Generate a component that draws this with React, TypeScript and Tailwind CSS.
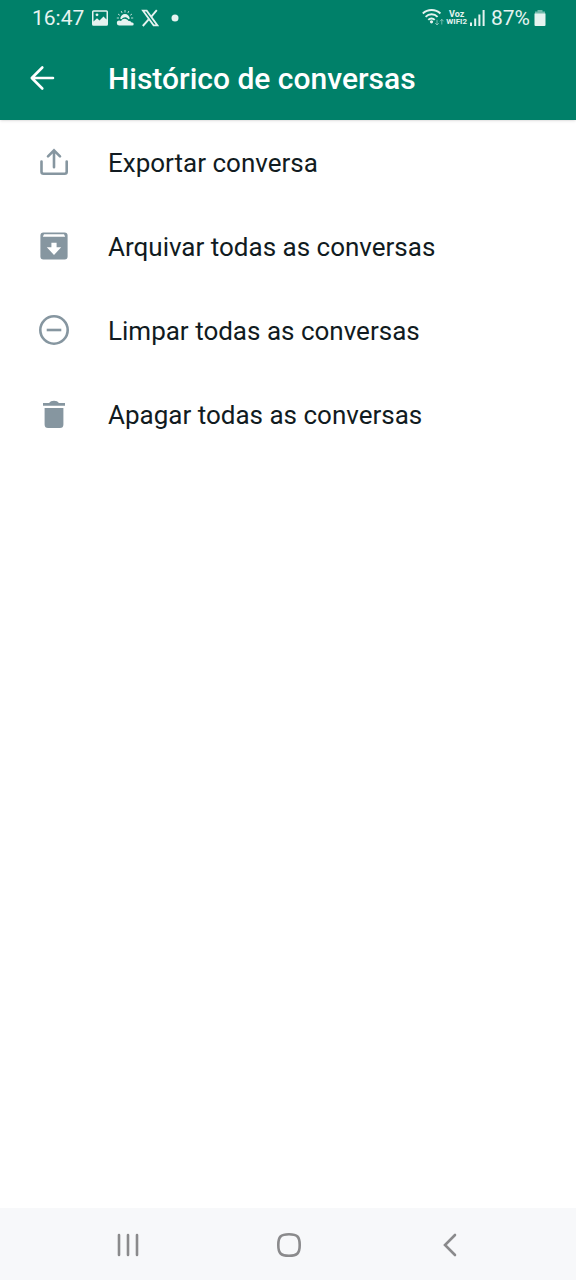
import React from "react";

const items = [
  {
    label: "Exportar conversa",
    icon: (
      <svg viewBox="0 0 36 36" aria-hidden="true" className="size-9 shrink-0" fill="none" stroke="#8696a0" strokeWidth="2.6" strokeLinecap="round">
        <path d="M5.500 17.500v10.300a2 2 0 0 0 2 2h21.200a2 2 0 0 0 2-2V17.500" />
        <path d="M18 23.300V6.500M12 12.300 18 6.300l6 6" />
      </svg>
    ),
  },
  {
    label: "Arquivar todas as conversas",
    icon: (
      <svg viewBox="0 0 36 36" aria-hidden="true" className="size-9 shrink-0" fill="#8696a0">
        <path
          fillRule="evenodd"
          d="M7.400 4.600h21.200a3 3 0 0 1 3 3V28.600a3 3 0 0 1-3 3H7.400a3 3 0 0 1-3-3V7.600a3 3 0 0 1 3-3zM8 6.300 6.800 8.800h22.400L28 6.300zM15.400 14.700v4.600h-4.600l7.200 7.700 7.200-7.700h-4.600v-4.600z"
        />
      </svg>
    ),
  },
  {
    label: "Limpar todas as conversas",
    icon: (
      <svg viewBox="0 0 36 36" aria-hidden="true" className="size-9 shrink-0" fill="none" stroke="#8696a0" strokeWidth="2.600">
        <circle cx="18" cy="18" r="13.700" />
        <path d="M10.700 18h14.600" />
      </svg>
    ),
  },
  {
    label: "Apagar todas as conversas",
    icon: (
      <svg viewBox="0 0 36 36" aria-hidden="true" className="size-9 shrink-0" fill="#8696a0">
        <path d="M7 7h6Q14.500 4.800 18 4.800T23 7h6v2.800H7zM8.600 12h18.800v16.500a3.500 3.500 0 0 1-3.500 3.500H12.100a3.500 3.500 0 0 1-3.500-3.500z" />
      </svg>
    ),
  },
];

function StatusBar() {
  return (
    <div className="flex h-9 items-center justify-between pr-[30px] pl-8 text-[21px] text-[#e6f3f0]">
      <div className="flex items-center gap-[7px]">
        <span className="pt-0.5">16:47</span>
        <svg viewBox="0 0 18 18" aria-label="Imagem" className="size-[18px]" fill="currentColor">
          <path
            fillRule="evenodd"
            d="M2.500 1.300h13a1.500 1.500 0 0 1 1.500 1.500v12.400a1.500 1.500 0 0 1-1.500 1.500h-13A1.500 1.500 0 0 1 1 15.200V2.800a1.500 1.500 0 0 1 1.500-1.500zM2.500 2.800v9.800l3.500-3.300 2.500 2.300L12.500 7.500l3 3V2.800z"
          />
          <circle cx="6" cy="5.800" r="1.400" />
        </svg>
        <svg viewBox="0 0 18 18" aria-label="Clima" className="size-[18px]" fill="currentColor">
          <path d="M4.300 9.800a4.700 4.700 0 0 1 9.400 0l-1.200.4C11.500 8.800 10.300 8.300 9 8.300S6.500 9 5.700 10.200z" />
          <path d="M3.500 16.500a2.500 2.500 0 0 1-.3-5c.7 0 1.300.2 1.800.5a4.200 4.200 0 0 1 7.600.1c1.600-.4 2.600.5 2.900 1.400h.7a1.500 1.500 0 0 1 0 3z" />
          <path d="M9 1v2.500M5.200 2l.9 2M12.800 2l-.9 2M2 5l1.800 1.300M16 5l-1.800 1.300M.8 9h2.200M15 9h2.200" stroke="currentColor" strokeWidth="1" opacity=".8" />
        </svg>
        <svg viewBox="0 0 18 18" aria-label="X" className="size-[18px]" fill="none" stroke="currentColor">
          <path d="M2 1.700h3.700l10.600 14.600h-3.700z" strokeWidth="1.800" />
          <path d="M15.800 1.200 10.300 7.700M7.700 10.400 1.800 17" strokeWidth="1.900" />
        </svg>
        <svg viewBox="0 0 18 18" aria-hidden="true" className="size-[18px]" fill="currentColor">
          <circle cx="9" cy="9" r="3.500" />
        </svg>
      </div>
      <div className="flex items-center">
        <svg viewBox="0 0 24 18" aria-label="Wi-Fi" className="h-[18px] w-6" fill="none" stroke="currentColor">
          <path d="M.8 4.500a12.800 12.800 0 0 1 17.600 0M3.600 7.800a8.500 8.500 0 0 1 12 0M6.300 10.800a4.500 4.500 0 0 1 6.400 0" strokeWidth="1.900" />
          <circle cx="9.500" cy="12.800" r="1.600" fill="currentColor" stroke="none" />
          <path d="M15 10.800v5M13.200 14l1.800 2 1.800-2M19.800 15.500v-5M18 12.300l1.800-2 1.800 2" strokeWidth="1" opacity=".5" />
        </svg>
        <span className="flex flex-col items-center text-[9px] leading-2 font-bold">
          <span>Voz</span>
          <span className="text-[8px]">WIFI2</span>
        </span>
        <svg viewBox="0 0 16 18" aria-label="Sinal" className="ml-[3px] h-[18px] w-4" fill="currentColor">
          <path d="M0 13.500h2V17H0zM4.200 9.500h2V17h-2zM8.400 5.500h2V17h-2zM12.600 1h2v16h-2z" />
        </svg>
        <span className="ml-[5px] pt-0.5">87%</span>
        <svg viewBox="0 0 12 18" aria-label="Bateria" className="ml-1 h-[18px] w-3" fill="currentColor">
          <path d="M3.500 1h5v1.500H11V5H1V2.500h2.500z" opacity=".5" />
          <path d="M.5 4.500h11V16a1 1 0 0 1-1 1h-9a1 1 0 0 1-1-1z" />
        </svg>
      </div>
    </div>
  );
}

export default function App() {
  return (
    <div className="flex min-h-screen flex-col bg-white font-['Roboto',sans-serif] text-[#111b21]">
      <header className="bg-[#008069] text-white shadow-sm">
        <StatusBar />
        <div className="flex h-21 items-center gap-12 pl-6">
          <button type="button" aria-label="Voltar" className="size-9">
            <svg viewBox="0 0 36 36" aria-hidden="true" className="size-9" fill="none" stroke="currentColor" strokeWidth="2.600" strokeLinecap="round" strokeLinejoin="round">
              <path d="M29 18H8M18.300 7.500 7.800 18l10.500 10.500" />
            </svg>
          </button>
          <h1 className="pt-0.5 text-3xl font-medium">Histórico de conversas</h1>
        </div>
      </header>
      <main className="flex-1">
        {items.map((item) => (
          <button key={item.label} type="button" className="flex h-21 w-full items-center gap-9 px-9 text-left text-[26px]">
            {item.icon}
            <span className="pt-0.5">{item.label}</span>
          </button>
        ))}
      </main>
      <nav className="grid h-18 grid-cols-3 place-items-center bg-[#f7f8fa] pt-0.5 pr-[45px] pl-[47px] text-[#8a8a8c]">
        <button type="button" aria-label="Recentes">
          <svg viewBox="0 0 28 28" aria-hidden="true" className="size-7" fill="none" stroke="currentColor" strokeWidth="2.600" strokeLinecap="round">
            <path d="M5 4v20M14 4v20M23 4v20" />
          </svg>
        </button>
        <button type="button" aria-label="Início">
          <svg viewBox="0 0 28 28" aria-hidden="true" className="size-7" fill="none" stroke="currentColor" strokeWidth="2.600">
            <path d="M14 3.300c8.300 0 10.700 2.400 10.700 10.700S22.300 24.700 14 24.700 3.300 22.300 3.300 14 5.700 3.300 14 3.300z" />
          </svg>
        </button>
        <button type="button" aria-label="Voltar uma tela">
          <svg viewBox="0 0 28 28" aria-hidden="true" className="size-7" fill="none" stroke="currentColor" strokeWidth="2.600" strokeLinecap="round">
            <path d="M19 4 9 14l10 10" />
          </svg>
        </button>
      </nav>
    </div>
  );
}
